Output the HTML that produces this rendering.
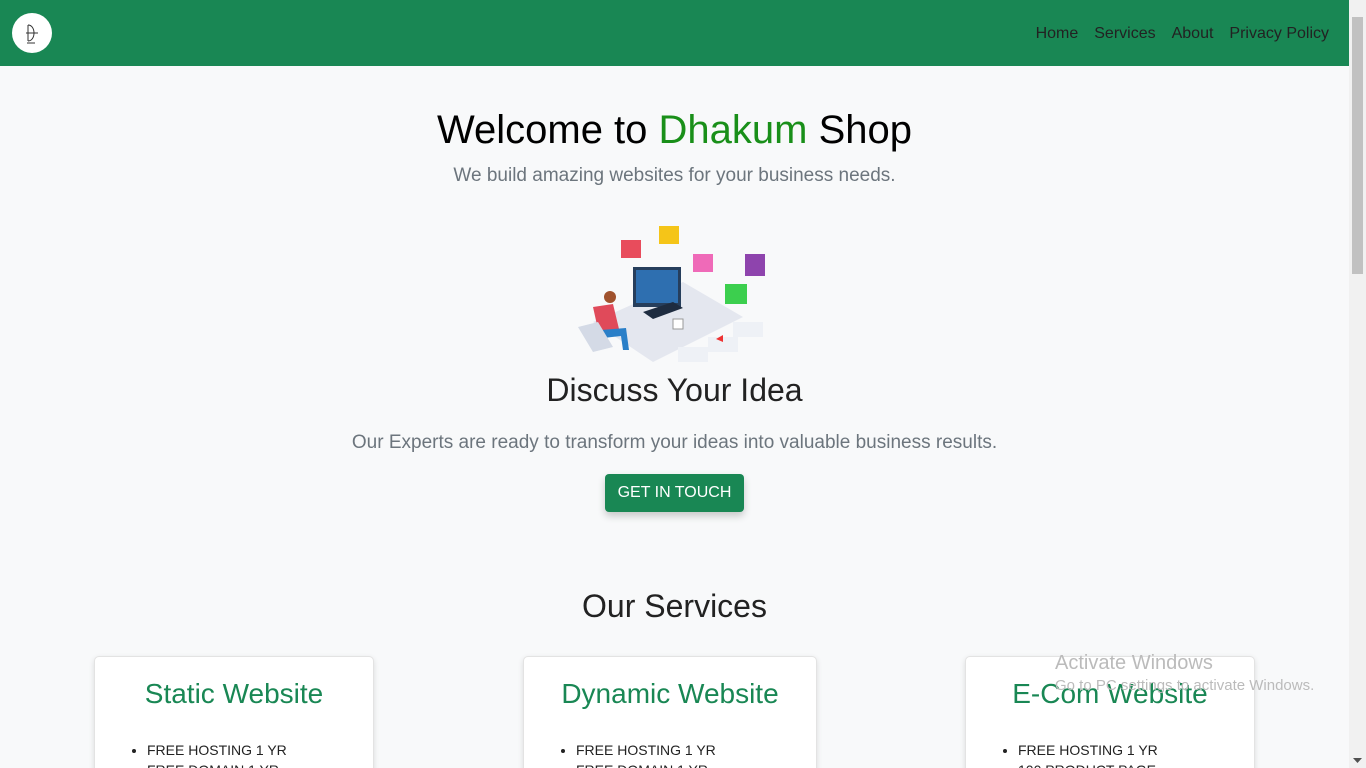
<!DOCTYPE html>
<html><head><meta charset="utf-8"><style>
*{box-sizing:border-box;margin:0;padding:0}
html,body{width:1366px;height:768px;overflow:hidden}
body{background:#f8f9fa;font-family:"Liberation Sans",Arial,sans-serif;position:relative}
.nav{position:absolute;left:0;top:0;width:1349px;height:66px;background:#198754}
.logo{position:absolute;left:12px;top:13px;width:40px;height:40px;border-radius:50%;background:#fff}
.menu{position:absolute;right:20px;top:25px;font-size:16px;color:#222}
.menu span{margin-left:16px}
.sb{position:absolute;right:0;top:0;width:17px;height:768px;background:#f1f1f1}
.sb i{position:absolute;left:3px;top:17px;width:11px;height:257px;background:#c1c1c1}
.c{position:absolute;left:0;width:1349px;text-align:center}
h1{font-weight:400;font-size:40px;color:#000}
.card{position:absolute;top:656px;height:130px;background:#fff;border:1px solid #e3e3e3;border-radius:5px;box-shadow:0 2px 6px rgba(0,0,0,.12)}
.card h3{font-weight:400;font-size:28px;color:#198754;text-align:center;margin-top:21px}
.card ul{margin:30px 0 0 52px;font-size:14px;color:#222;line-height:20px}
.btn{position:absolute;left:605px;top:474px;width:139px;height:38px;background:#198754;color:#fff;border-radius:4px;font-size:16px;text-align:center;line-height:38px;box-shadow:0 4px 8px rgba(0,0,0,.2)}
.wm{position:absolute;left:1055px;color:#bbb}
</style></head><body>
<div class="nav"><div class="logo"><svg width="40" height="40" viewBox="0 0 40 40"><path d="M16 12v16M16 12c8 0 8 16 0 16M14 20h12M15 30h8" stroke="#333" stroke-width="1" fill="none"/></svg></div>
<div class="menu"><span>Home</span><span>Services</span><span>About</span><span>Privacy Policy</span></div></div>
<div class="sb"><i></i><svg style="position:absolute;left:4px;bottom:4px" width="9" height="6"><polygon points="0,0 9,0 4.5,5" fill="#505050"/></svg></div>
<div class="c" style="top:108px"><h1>Welcome to <span style="color:#198f19">Dhakum</span> Shop</h1></div>
<div class="c" style="top:165px;font-size:19px;color:#6c757d">We build amazing websites for your business needs.</div>
<svg style="position:absolute;left:573px;top:222px" width="200" height="150" viewBox="0 0 200 150">
<polygon points="20,100 110,60 170,95 80,140" fill="#e4e7ef"/>
<rect x="60" y="45" width="48" height="40" fill="#263e5c"/><rect x="63" y="48" width="42" height="33" fill="#2e6fb0"/>
<polygon points="70,90 100,80 110,86 80,97" fill="#1e2c40"/>
<circle cx="37" cy="75" r="6" fill="#a0522d"/><path d="M20 85 l20 -3 l6 25 l-20 5z" fill="#e04a5a"/><path d="M28 108 l25 -2 l3 22 l-6 0 l-2 -14 l-18 2z" fill="#2a7fc8"/>
<polygon points="5,105 25,100 40,125 20,130" fill="#d4dae6"/>
<rect x="100" y="97" width="10" height="10" fill="#fff" stroke="#999"/>
<rect x="48" y="18" width="20" height="18" fill="#e84c5c"/><rect x="86" y="4" width="20" height="18" fill="#f5c518"/>
<rect x="120" y="32" width="20" height="18" fill="#ef6ab8"/><rect x="172" y="32" width="20" height="22" fill="#8e44ad"/><rect x="152" y="62" width="22" height="20" fill="#3ccf4e"/>
<rect x="105" y="125" width="30" height="15" fill="#eef1f6"/><rect x="135" y="115" width="30" height="15" fill="#eef1f6"/><rect x="160" y="100" width="30" height="15" fill="#eef1f6"/>
<polygon points="143,117 150,113 150,120" fill="#e33"/>
</svg>
<div class="c" style="top:372px;font-size:32px;color:#222">Discuss Your Idea</div>
<div class="c" style="top:432px;font-size:19px;color:#6c757d">Our Experts are ready to transform your ideas into valuable business results.</div>
<div class="btn">GET IN TOUCH</div>
<div class="c" style="top:588px;font-size:32px;color:#222">Our Services</div>
<div class="card" style="left:94px;width:280px"><h3>Static Website</h3><ul><li>FREE HOSTING 1 YR</li><li>FREE DOMAIN 1 YR</li></ul></div>
<div class="card" style="left:523px;width:294px"><h3>Dynamic Website</h3><ul><li>FREE HOSTING 1 YR</li><li>FREE DOMAIN 1 YR</li></ul></div>
<div class="card" style="left:965px;width:290px"><h3>E-Com Website</h3><ul><li>FREE HOSTING 1 YR</li><li>100 PRODUCT PAGE</li></ul></div>
<div class="wm" style="top:652px;font-size:20px">Activate Windows</div>
<div class="wm" style="top:677px;font-size:15px">Go to PC settings to activate Windows.</div>
</body></html>
